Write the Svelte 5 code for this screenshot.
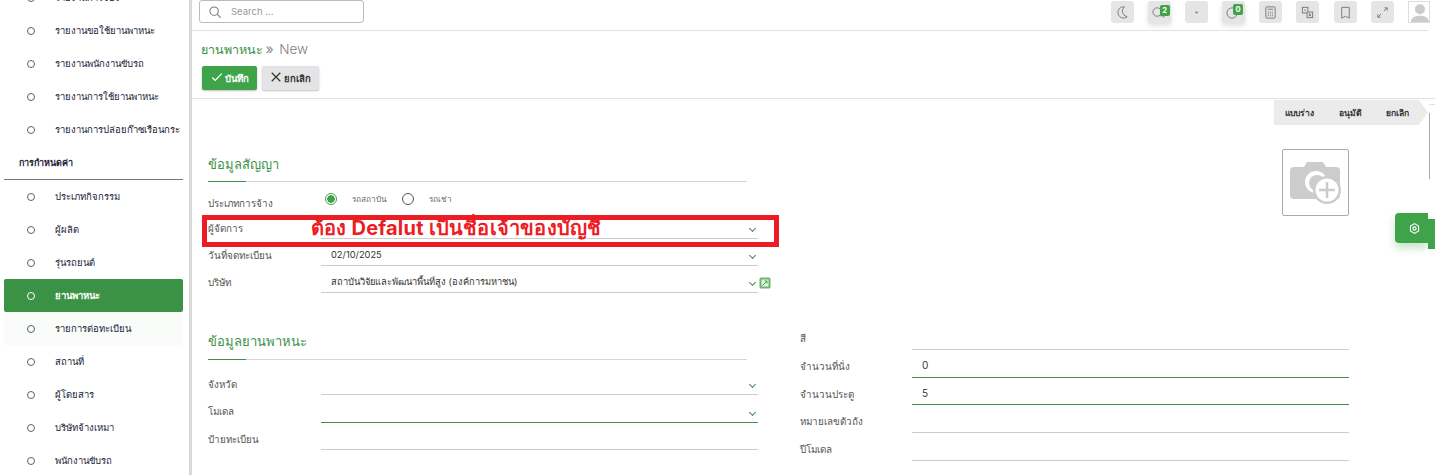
<script lang="ts">
  const topMenu = ['รายงานการจอง', 'รายงานขอใช้ยานพาหนะ', 'รายงานพนักงานขับรถ', 'รายงานการใช้ยานพาหนะ', 'รายงานการปล่อยก๊าซเรือนกระ'];
  const settings = ['ประเภทกิจกรรม', 'ผู้ผลิต', 'รุ่นรถยนต์', 'ยานพาหนะ', 'รายการต่อทะเบียน', 'สถานที่', 'ผู้โดยสาร', 'บริษัทจ้างเหมา', 'พนักงานขับรถ'];
  const icons = ['moon', 'chat', 'caret', 'clock', 'calc', 'lang', 'book', 'expand'];
  const rightFields = [
    { label: 'สี', value: '', on: false },
    { label: 'จำนวนที่นั่ง', value: '0', on: true },
    { label: 'จำนวนประตู', value: '5', on: true },
    { label: 'หมายเลขตัวถัง', value: '', on: false },
    { label: 'ปีโมเดล', value: '', on: false }
  ];
</script>

<div class="page">
  <aside class="sidebar">
    <ul class="menu first">
      {#each topMenu as item}
        <li class="item"><span class="dot"></span><span class="name">{item}</span></li>
      {/each}
    </ul>
    <div class="group">การกำหนดค่า</div>
    <ul class="menu">
      {#each settings as item}
        <li class="item" class:active={item === 'ยานพาหนะ'} class:hover={item === 'รายการต่อทะเบียน'}>
          <span class="dot"></span><span class="name">{item}</span>
        </li>
      {/each}
    </ul>
  </aside>

  <main class="main">
    <header class="topbar">
      <div class="search">
        <svg viewBox="0 0 16 16" class="search-icon" fill="none" stroke="#777" stroke-width="1.2">
          <circle cx="7" cy="7" r="4.8" /><path d="M10.5 10.5l4 4" />
        </svg>
        <span>Search ...</span>
      </div>
      <div class="tools">
        {#each icons as icon}
          <span class="tool" class:raised={icon === 'chat' || icon === 'clock'}>
            <svg viewBox="0 0 16 16" fill="none" stroke="#777" stroke-width="1">
              {#if icon === 'moon'}
                <path d="M10 2a6 6 0 1 0 3 10.5A6 6 0 0 1 10 2z" />
              {:else if icon === 'chat'}
                <circle cx="5.5" cy="7.5" r="4.5" /><path d="M8 11.5h4.5v2" />
              {:else if icon === 'caret'}
                <path d="M6 7.2h4L8 9.4z" fill="#777" stroke="none" />
              {:else if icon === 'clock'}
                <circle cx="6.5" cy="8.5" r="5.5" />
              {:else if icon === 'calc'}
                <rect x="3" y="2" width="10" height="12" rx="1" /><path d="M5 4.5h6" /><path d="M5 7.5h6M5 9.5h6M5 11.5h6" stroke-dasharray="1.2 1" />
              {:else if icon === 'lang'}
                <rect x="2.5" y="2.5" width="6" height="6" /><path d="M4.5 5.5h2" /><rect x="7.5" y="7.5" width="6" height="6" fill="#e5e5e5" /><path d="M9.5 12l1-3 1 3" />
              {:else if icon === 'book'}
                <path d="M4 2.5h8v11.5l-4-2-4 2z" />
              {:else}
                <path d="M9.5 6.5L13 3M10 3h3v3M6.5 9.5L3 13M3 10v3h3" />
              {/if}
            </svg>
            {#if icon === 'chat'}<b class="badge chat">2</b>{/if}
            {#if icon === 'clock'}<b class="badge clock">0</b>{/if}
          </span>
        {/each}
        <span class="avatar">
          <svg viewBox="0 0 22 22" fill="#ccc">
            <circle cx="12" cy="8" r="5.5" /><path d="M2 22c0-5 5-7 10-7s10 2 10 7z" />
          </svg>
        </span>
      </div>
    </header>

    <section class="titlebar">
      <h1><span class="crumb">ยานพาหนะ</span> <span class="sep">»</span> <span class="new">New</span></h1>
      <div class="actions">
        <button class="btn save">
          <svg viewBox="0 0 14 14" fill="none" stroke="#fff" stroke-width="1.5"><path d="M1.5 7.5l3.5 3.5 7.5-8" /></svg>
          บันทึก
        </button>
        <button class="btn cancel">
          <svg viewBox="0 0 14 14" fill="none" stroke="#333" stroke-width="1.4"><path d="M2 2l10 10M12 2L2 12" /></svg>
          ยกเลิก
        </button>
      </div>
    </section>

    <div class="stages">
      <span>แบบร่าง</span><span>อนุมัติ</span><span>ยกเลิก</span>
    </div>

    <div class="sheet">
      <div class="sheet-top">
        <div class="col-left">
          <h2 class="heading">ข้อมูลสัญญา</h2>
          <div class="radio-row">
            <span class="label">ประเภทการจ้าง</span>
            <span class="radio checked"></span><span class="radio-text">รถสถาบัน</span>
            <span class="radio"></span><span class="radio-text">รถเช่า</span>
          </div>
          <div class="row">
            <span class="label">ผู้จัดการ</span>
            <div class="field"><span class="chev"></span></div>
          </div>
          <div class="row">
            <span class="label">วันที่จดทะเบียน</span>
            <div class="field">02/10/2025<span class="chev"></span></div>
          </div>
          <div class="row">
            <span class="label">บริษัท</span>
            <div class="field">สถาบันวิจัยและพัฒนาพื้นที่สูง (องค์การมหาชน)<span class="chev"></span></div>
            <svg class="ext" viewBox="0 0 12 12">
              <rect width="11" height="11" x=".5" y=".5" rx="1.5" fill="#6fb56f" />
              <rect x="2.5" y="2.5" width="7" height="7" fill="#e6f2e6" />
              <path d="M3.5 8.5l4-4M5.5 4h2.5v2.5" stroke="#4b9a4b" fill="none" />
            </svg>
          </div>
        </div>
        <div class="photo">
          <svg viewBox="0 0 52 44" fill="#ccc">
            <path d="M4 6h10l3-5h16l3 5h10a4 4 0 0 1 4 4v24a4 4 0 0 1-4 4H4a4 4 0 0 1-4-4V10a4 4 0 0 1 4-4z" />
            <circle cx="26" cy="21" r="11" fill="#fff" />
            <circle cx="27" cy="22" r="8" fill="#ccc" />
            <circle cx="37" cy="29" r="14" fill="#ccc" />
            <circle cx="37" cy="29" r="11.5" fill="#fff" />
            <path d="M37 21v16M29 29h16" stroke="#ccc" stroke-width="2.5" />
          </svg>
        </div>
      </div>

      <div class="sheet-bottom">
        <div class="col-left">
          <h2 class="heading second">ข้อมูลยานพาหนะ</h2>
          <div class="row">
            <span class="label">จังหวัด</span>
            <div class="field"><span class="chev"></span></div>
          </div>
          <div class="row">
            <span class="label">โมเดล</span>
            <div class="field on"><span class="chev"></span></div>
          </div>
          <div class="row">
            <span class="label">ป้ายทะเบียน</span>
            <div class="field"></div>
          </div>
        </div>
        <div class="col-right">
          {#each rightFields as f}
            <div class="row right">
              <span class="label">{f.label}</span>
              <div class="field" class:on={f.on}>{f.value}</div>
            </div>
          {/each}
        </div>
      </div>
    </div>
  </main>

  <!-- annotation drawn over the screenshot -->
  <div class="note"><span>ต้อง Defalut เป็นชื่อเจ้าของบัญชี</span></div>

  <div class="side-panel"></div>
  <div class="side-tick"></div>
  <div class="fab">
    <svg viewBox="0 0 16 16" fill="none" stroke="#fff" stroke-width="1.4">
      <path d="M8 2l5 3v6l-5 3-5-3V5z" /><circle cx="8" cy="8" r="2" />
    </svg>
  </div>
  <div class="fab-edge"></div>
</div>

<style>
  :global(body) {
    margin: 0;
    background: #fff;
    overflow: hidden;
  }

  .page {
    position: relative;
    display: flex;
    width: 1435px;
    height: 475px;
    overflow: hidden;
    font-family: Inter, 'Noto Sans', 'DejaVu Sans', sans-serif;
    color: #333;
  }

  .sidebar {
    flex: none;
    width: 192px;
    box-sizing: border-box;
    padding: 0 6px 0 4px;
    border-right: 3px solid #d9d9d9;
  }

  .menu {
    list-style: none;
    margin: 0;
    padding: 0;
  }

  .menu.first {
    margin-top: -19px;
  }

  .item {
    display: flex;
    align-items: center;
    height: 33px;
    font-size: 9.5px;
    color: #1a2238;
  }

  .item.active {
    background: #3b9144;
    border-radius: 2px;
    color: #fff;
    font-weight: 700;
  }

  .item.hover {
    background: #fafcfa;
  }

  .dot {
    flex: none;
    box-sizing: border-box;
    width: 8px;
    height: 8px;
    margin: 0 20.5px 0 22.5px;
    border: 1px solid #5a6270;
    border-radius: 50%;
  }

  .active .dot {
    border-color: #fff;
  }

  .name {
    white-space: nowrap;
  }

  .group {
    height: 33px;
    line-height: 33px;
    padding-left: 15px;
    font-size: 9px;
    font-weight: 700;
    color: #1a2238;
    border-bottom: 1px solid #777;
  }

  .main {
    flex: 1;
    min-width: 0;
    display: flex;
    flex-direction: column;
  }

  .topbar {
    flex: none;
    display: flex;
    align-items: flex-start;
    justify-content: space-between;
    height: 30px;
    border-bottom: 1px solid #e0e0e0;
    padding-left: 7px;
    margin-right: 7px;
  }

  .search {
    display: flex;
    align-items: center;
    box-sizing: border-box;
    width: 165px;
    height: 23px;
    border: 1px solid #bbb;
    border-radius: 3px;
    font-size: 9.5px;
    color: #999;
    padding-left: 8px;
  }

  .search-icon {
    width: 14px;
    height: 14px;
    margin-right: 9px;
  }

  .tools {
    display: flex;
    padding-top: 1px;
    margin-right: -2px;
  }

  .tool {
    position: relative;
    display: flex;
    align-items: center;
    justify-content: center;
    width: 23px;
    height: 22px;
    margin-right: 14.2px;
    background: #e5e5e5;
    border-radius: 3px;
  }

  .tool.raised {
    box-shadow: 0 3px 5px rgba(0, 0, 0, 0.12);
  }

  .tool svg {
    width: 15px;
    height: 15px;
  }

  .badge {
    position: absolute;
    width: 10px;
    height: 11px;
    border-radius: 2px;
    background: #3fa34a;
    color: #fff;
    font-size: 7.5px;
    line-height: 11px;
    text-align: center;
  }

  .badge.chat {
    top: 4px;
    left: 12px;
  }

  .badge.clock {
    top: 3px;
    left: 11px;
  }

  .avatar {
    width: 22px;
    height: 22px;
    border: 1px solid #ddd;
    box-sizing: border-box;
    overflow: hidden;
  }

  .titlebar {
    flex: none;
    height: 67px;
    border-bottom: 1px solid #e0e0e0;
    padding-left: 9px;
  }

  h1 {
    margin: 0;
    padding-top: 10px;
    height: 15px;
    font-size: 12.5px;
    line-height: 16px;
    font-weight: 400;
  }

  .crumb {
    color: #3d9147;
    font-weight: 500;
  }

  .sep {
    margin-left: -1px;
    color: #888;
    font-size: 14px;
  }

  .new {
    margin-left: 2px;
    color: #808080;
    font-size: 13.5px;
    font-weight: 300;
  }

  .actions {
    display: flex;
    gap: 5px;
    margin-top: 10px;
    padding-left: 1px;
  }

  .btn {
    display: flex;
    align-items: center;
    justify-content: center;
    gap: 2px;
    height: 24px;
    padding: 0;
    border: none;
    border-radius: 2px;
    font-family: inherit;
    font-size: 9.5px;
    font-weight: 700;
    box-shadow: 0 1px 2px rgba(0, 0, 0, 0.25);
  }

  .btn svg {
    width: 12px;
    height: 12px;
    margin-bottom: 3px;
  }

  .save {
    width: 55px;
    background: #3fa34a;
    color: #fff;
  }

  .cancel {
    width: 57px;
    background: #e4e4e6;
    color: #333;
  }

  .stages {
    flex: none;
    align-self: flex-end;
    display: flex;
    align-items: center;
    gap: 24.5px;
    box-sizing: border-box;
    width: 154px;
    height: 25px;
    margin: 1px 7px 0 0;
    padding-left: 11px;
    background: #ebebeb;
    clip-path: polygon(0 0, 94% 0, 100% 50%, 94% 100%, 0 100%);
    font-size: 8.5px;
    font-weight: 700;
    color: #333;
  }

  .sheet {
    flex: 1;
    padding-left: 16px;
    min-height: 0;
  }

  .sheet-top {
    display: flex;
    height: 176px;
    margin-top: 24px;
  }

  .col-left {
    width: 550px;
  }

  .heading {
    position: relative;
    width: 539px;
    height: 32px;
    margin: 0;
    line-height: 30px;
    font-size: 13px;
    font-weight: 500;
    color: #3d9147;
    border-bottom: 1px solid #d5d5d5;
  }

  .heading::after {
    content: '';
    position: absolute;
    left: 0;
    bottom: -1px;
    width: 38px;
    height: 1px;
    background: #3d9147;
  }

  .heading.second {
    height: 34px;
    line-height: 32px;
    margin-bottom: 8px;
  }

  .radio-row {
    display: flex;
    align-items: center;
    height: 26px;
    padding-top: 4px;
  }

  .radio-row .label {
    width: 117px;
    padding-top: 10px;
  }

  .radio {
    flex: none;
    box-sizing: border-box;
    width: 12px;
    height: 12px;
    border: 1px solid #555;
    border-radius: 50%;
    background: #fff;
  }

  .radio.checked {
    border-color: #3fa34a;
    background: radial-gradient(circle, #3fa34a 3.5px, #fff 4px);
  }

  .radio-text {
    margin: 0 15px 0 15px;
    font-size: 8.2px;
    color: #666;
  }

  .row {
    display: flex;
    align-items: flex-start;
    height: 27.4px;
  }

  .sheet-top .row {
    height: 27px;
  }

  .row.right {
    height: 27.75px;
  }

  .label {
    flex: none;
    width: 113px;
    font-size: 9.8px;
    line-height: 12px;
    color: #555;
    padding-top: 11px;
    white-space: nowrap;
  }

  .field {
    position: relative;
    flex: none;
    box-sizing: border-box;
    width: 437px;
    height: 100%;
    padding: 10px 0 0 10px;
    border-bottom: 1px solid #ccc;
    font-size: 9.3px;
    line-height: 12px;
    color: #333;
    white-space: nowrap;
  }

  .field.on {
    border-bottom-color: #3d9147;
  }

  .chev {
    position: absolute;
    right: 3.5px;
    bottom: 7px;
    width: 4px;
    height: 4px;
    border-right: 1.3px solid #3d9147;
    border-bottom: 1.3px solid #3d9147;
    transform: rotate(45deg);
  }

  .ext {
    flex: none;
    width: 12px;
    height: 12px;
    margin: 11px 0 0 1px;
  }

  .photo {
    box-sizing: border-box;
    flex: none;
    width: 67px;
    height: 67px;
    margin-left: 524px;
    border: 1px solid #aaa;
    border-radius: 2px;
    display: flex;
    align-items: center;
    justify-content: center;
  }

  .photo svg {
    width: 52px;
    height: 44px;
  }

  .sheet-bottom {
    display: flex;
    gap: 42px;
  }

  .col-right {
    width: 549px;
    margin-top: -3px;
  }

  .right .label {
    width: 112px;
  }

  .right .field {
    padding-top: 9px;
    font-size: 10px;
  }

  .note {
    position: absolute;
    left: 202px;
    top: 215px;
    box-sizing: border-box;
    width: 577px;
    height: 32px;
    border: 5px solid #ed1c24;
  }

  .note span {
    position: absolute;
    left: 104px;
    top: -4px;
    font-size: 20px;
    letter-spacing: 0.2px;
    line-height: 24px;
    font-weight: 700;
    color: #ed1c24;
    white-space: nowrap;
  }

  /* next panel peeking in at the right edge */
  .side-panel {
    position: absolute;
    left: 1429px;
    top: 104px;
    width: 6px;
    height: 75px;
    border-top: 1px solid #e0e0e0;
  }

  .side-tick {
    position: absolute;
    left: 1429px;
    top: 113px;
    width: 1px;
    height: 66px;
    background: #aaa;
  }

  .fab {
    position: absolute;
    left: 1395px;
    top: 213px;
    width: 33px;
    height: 30px;
    background: #3fa34a;
    border-radius: 4px 0 0 4px;
    box-shadow: 0 5px 8px rgba(63, 163, 74, 0.3);
    display: flex;
    align-items: center;
    justify-content: center;
  }

  .fab svg {
    width: 13px;
    height: 13px;
    margin-left: 5px;
  }

  .fab-edge {
    position: absolute;
    left: 1428px;
    top: 219px;
    width: 7px;
    height: 30px;
    background: #3fa34a;
  }
</style>
